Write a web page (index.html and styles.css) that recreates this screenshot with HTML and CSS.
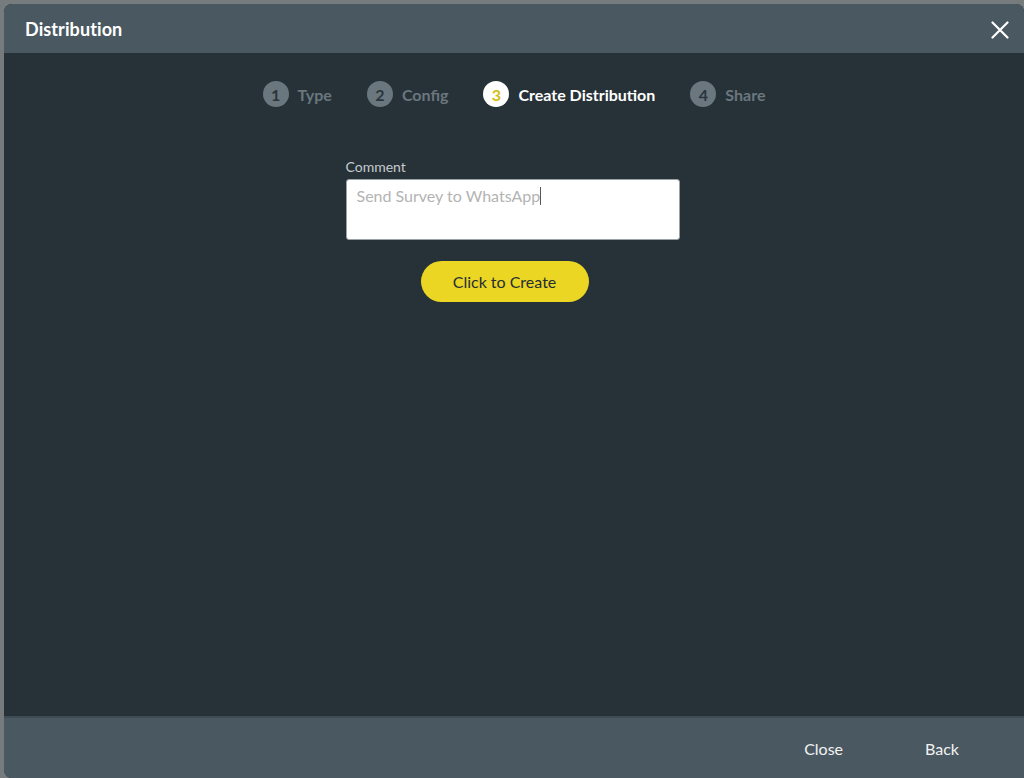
FILE: index.html
```html
<!DOCTYPE html>
<html>
<head>
<meta charset="utf-8">
<link rel="stylesheet" href="styles.css">
</head>
<body>
<div class="dialog">
  <header class="header">
    <h1 class="title">Distribution</h1>
    <button class="close-x" aria-label="Close">
      <svg width="18" height="18" viewBox="0 0 18 18"><path d="M1.5 1.5 L16.5 16.5 M16.5 1.5 L1.5 16.5" stroke="#fff" stroke-width="2.2" stroke-linecap="round"/></svg>
    </button>
  </header>
  <main class="body">
    <nav class="steps">
      <div class="step"><span class="num">1</span><span class="label">Type</span></div>
      <div class="step"><span class="num">2</span><span class="label">Config</span></div>
      <div class="step active"><span class="num">3</span><span class="label">Create Distribution</span></div>
      <div class="step"><span class="num">4</span><span class="label">Share</span></div>
    </nav>
    <div class="form">
      <label class="field-label">Comment</label>
      <div class="textarea"><span class="placeholder">Send Survey to WhatsApp</span><span class="caret"></span></div>
      <button class="create">Click to Create</button>
    </div>
  </main>
  <footer class="footer">
    <button class="foot-btn">Close</button>
    <button class="foot-btn">Back</button>
  </footer>
</div>
</body>
</html>
```
FILE: styles.css
```css
* { box-sizing: border-box; }
html, body { margin: 0; padding: 0; }
body {
  width: 1024px;
  height: 778px;
  background: #767b7e;
  font-family: Lato, "Open Sans", sans-serif;
  overflow: hidden;
  padding: 4px 0 0 4px;
}
.dialog {
  width: 1020px;
  height: 774px;
  display: flex;
  flex-direction: column;
  border-radius: 8px 8px 0 8px;
  overflow: hidden;
  background: #273238;
}
.header {
  height: 49px;
  background: #4a5961;
  display: flex;
  align-items: center;
  justify-content: space-between;
  padding: 0 14px 0 21px;
}
.title {
  margin: 0;
  font-size: 18px;
  font-weight: 700;
  color: #fff;
  letter-spacing: 0.1px;
}
.close-x {
  background: none;
  border: none;
  padding: 0;
  width: 20px;
  height: 20px;
  display: flex;
  align-items: center;
  justify-content: center;
  margin-top: 2px;
}
.body {
  flex: 1;
  display: flex;
  flex-direction: column;
  align-items: center;
}
.steps {
  display: flex;
  margin-top: 28px;
  margin-left: 0px;
  gap: 35px;
}
.step {
  display: flex;
  align-items: center;
  gap: 9px;
}
.num {
  width: 26px;
  height: 26px;
  border-radius: 50%;
  background: #6a777e;
  color: #2b353b;
  font-size: 16px;
  font-weight: 700;
  display: flex;
  align-items: center;
  justify-content: center;
}
.label {
  font-size: 16px;
  font-weight: 700;
  color: #6a777e;
}
.step.active .num {
  background: #fff;
  color: #d4bc12;
}
.step.active .label { color: #fff; }
.form {
  margin-top: 51px;
  width: 334px;
  margin-left: -3px;
  display: flex;
  flex-direction: column;
  align-items: center;
}
.field-label {
  align-self: flex-start;
  font-size: 14px;
  color: #c5cbce;
  margin-bottom: 4px;
}
.textarea {
  width: 334px;
  height: 61px;
  background: #fff;
  border: 1px solid #9aa3a8;
  border-radius: 3px;
  padding: 6px 10px;
  display: flex;
  align-items: flex-start;
}
.placeholder {
  font-size: 16px;
  color: #b3b3b3;
  line-height: 20px;
}
.caret {
  width: 1px;
  height: 18px;
  background: #555;
  margin-top: 1px;
}
.create {
  margin-top: 21px;
  margin-right: 16px;
  width: 168px;
  height: 41px;
  border: none;
  border-radius: 21px;
  background: #ecd624;
  color: #262e33;
  font-family: Lato, sans-serif;
  font-size: 16px;
}
.footer {
  height: 62px;
  background: #4a5961;
  display: flex;
  align-items: center;
  justify-content: flex-end;
  padding: 0 65px 0 0;
  gap: 82px;
  border-top: 2px solid #3f4c53;
}
.foot-btn {
  background: none;
  border: none;
  padding: 0;
  color: #f2f2f2;
  font-family: Lato, sans-serif;
  font-size: 16px;
}
```
